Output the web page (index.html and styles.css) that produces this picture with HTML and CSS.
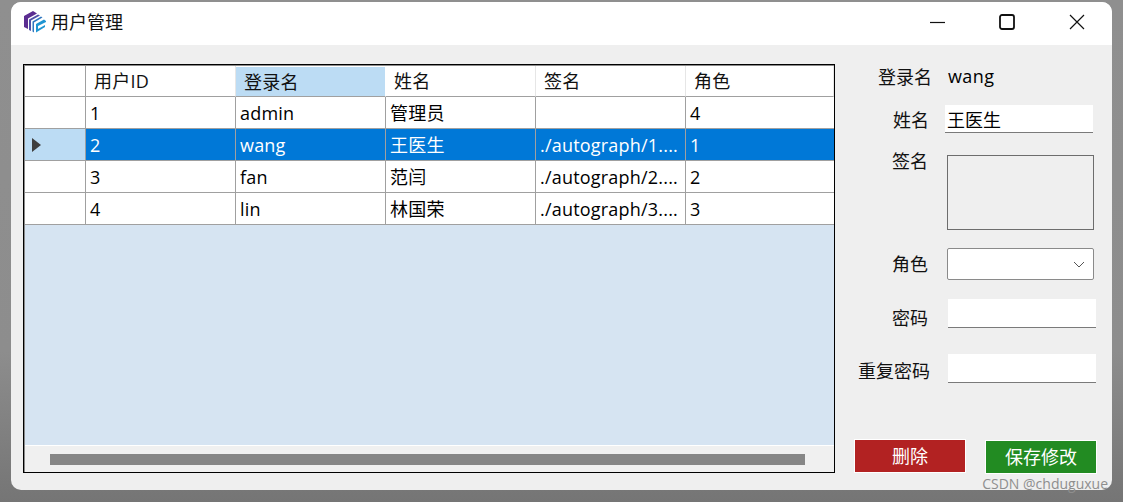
FILE: index.html
```html
<!DOCTYPE html>
<html lang="zh">
<head>
<meta charset="utf-8">
<title>用户管理</title>
<link rel="stylesheet" href="styles.css">
</head>
<body>
<div class="window">
  <header class="titlebar">
    <svg class="logo" viewBox="0 0 24 24" width="24" height="24" aria-hidden="true">
      <path d="M1 6 L10 1 L14 3.500 L5 8.500 V19 L1 17 Z" fill="#5b2d91"/>
      <path d="M6 9.500 L15 4.500 L17 5.500 L8 10.500 V21 L6 20 Z" fill="#4f4fa8"/>
      <path d="M9.500 11.500 L18 6.500 L19.500 7.500 L11 12.500 V22.500 L9.500 21.500 Z" fill="#3178c0"/>
      <path d="M13 14 L21 9.500 L23 11 V12 L15 16 V19 L22 15 V17 L13 22.500 Z" fill="#1f95d2"/>
    </svg>
    <h1 class="title">用户管理</h1>
    <div class="controls">
      <svg width="16" height="16" viewBox="0 0 16 16" aria-hidden="true"><path d="M1 8.500H16" class="glyph"/></svg>
      <svg width="16" height="16" viewBox="0 0 16 16" aria-hidden="true"><rect x="1" y="1" width="14" height="14" rx="2" class="glyph glyph-heavy"/></svg>
      <svg width="16" height="16" viewBox="0 0 16 16" aria-hidden="true"><path d="M1 1L15 15M15 1L1 15" class="glyph"/></svg>
    </div>
  </header>

  <main class="content">
    <section class="grid-view">
      <div class="grid">
        <div class="hcell corner"></div>
        <div class="hcell">用户ID</div>
        <div class="hcell sorted">登录名</div>
        <div class="hcell">姓名</div>
        <div class="hcell">签名</div>
        <div class="hcell">角色</div>

        <div class="rowhead"></div>
        <div class="cell">1</div>
        <div class="cell">admin</div>
        <div class="cell">管理员</div>
        <div class="cell"></div>
        <div class="cell">4</div>

        <div class="rowhead current"><span class="arrow"></span></div>
        <div class="cell selected">2</div>
        <div class="cell selected">wang</div>
        <div class="cell selected">王医生</div>
        <div class="cell selected">./autograph/1....</div>
        <div class="cell selected">1</div>

        <div class="rowhead"></div>
        <div class="cell">3</div>
        <div class="cell">fan</div>
        <div class="cell">范闫</div>
        <div class="cell">./autograph/2....</div>
        <div class="cell">2</div>

        <div class="rowhead"></div>
        <div class="cell">4</div>
        <div class="cell">lin</div>
        <div class="cell">林国荣</div>
        <div class="cell">./autograph/3....</div>
        <div class="cell">3</div>
      </div>
      <div class="empty"></div>
      <div class="hscroll"><div class="thumb"></div></div>
    </section>

    <aside class="form">
      <div class="row row-login"><span class="label">登录名</span><span class="value">wang</span></div>
      <div class="row row-name"><span class="label">姓名</span><span class="textbox name-box">王医生</span></div>
      <div class="row row-sign"><span class="label">签名</span><span class="picture"></span></div>
      <div class="row row-role"><span class="label">角色</span>
        <span class="combo">
          <svg width="12" height="7" viewBox="0 0 12 7" aria-hidden="true"><path d="M1 1L6 6L11 1" class="chev"/></svg>
        </span>
      </div>
      <div class="row row-pass"><span class="label">密码</span><span class="textbox pass-box"></span></div>
      <div class="row row-repeat"><span class="label">重复密码</span><span class="textbox pass-box"></span></div>
      <div class="actions">
        <span class="btn btn-del">删除</span>
        <span class="btn btn-save">保存修改</span>
      </div>
    </aside>
  </main>
  <div class="watermark">CSDN @chduguxue</div>
</div>
</body>
</html>
```

FILE: styles.css
```css
* { box-sizing: border-box; }
html, body { margin: 0; height: 502px; overflow: hidden; }
body {
  background: linear-gradient(180deg, #8f8f8f 0%, #8d8d8d 70%, #757575 100%);
  font-family: "Open Sans", "Noto Sans CJK SC", sans-serif;
  font-size: 18px;
  color: #000;
  padding: 2px 11px 12px;
}
.window {
  position: relative;
  width: 1101px;
  height: 488px;
  background: #efefef;
  border-radius: 10px;
}
.titlebar {
  display: flex;
  align-items: center;
  height: 43px;
  background: #fff;
  border-radius: 10px 10px 0 0;
  padding-left: 12px;
}
.logo { flex: none; margin-top: -3px; }
.title {
  margin: -4px 0 0 4px;
  font-size: 18px;
  font-weight: 400;
  line-height: 24px;
  color: #111;
}
.controls {
  margin-left: auto;
  margin-top: -3px;
  display: flex;
  gap: 54px;
  padding-right: 27px;
  align-items: center;
}
.glyph { fill: none; stroke: #111; stroke-width: 1.2; }
.glyph-heavy { stroke-width: 1.800; }

.content {
  display: flex;
  padding: 19px 0 0 12px;
}
.grid-view {
  width: 812px;
  height: 409px;
  flex: none;
  border: 1px solid #000;
  padding: 1px 0 0 1px;
  display: flex;
  flex-direction: column;
  background: #8a8a8a;
}
.grid {
  display: grid;
  grid-template-columns: 61px repeat(4, 150px) 1fr;
  grid-template-rows: 31px repeat(4, 32px);
  flex: none;
}
.hcell, .cell, .rowhead {
  display: flex;
  align-items: center;
  background: #fff;
  white-space: nowrap;
  overflow: hidden;
  line-height: 1;
}
.hcell {
  padding: 0 0 0 8px;
  border-right: 1px solid #e6e6e6;
  border-bottom: 1px solid #a0a0a0;
  color: #111;
  letter-spacing: 0.2px;
}
.hcell.corner { border-right-color: #a0a0a0; }
.hcell.sorted {
  background: #bcdcf4;
  border-top: 1px solid #fff;
  border-right-color: #fff;
}
.cell {
  padding: 0 0 0 4px;
  border-right: 1px solid #a0a0a0;
  border-bottom: 1px solid #a0a0a0;
  letter-spacing: 0.2px;
}
.cell:nth-child(6n) { border-right: 0; }
.rowhead {
  border-right: 1px solid #a0a0a0;
  border-bottom: 1px solid #a0a0a0;
}
.rowhead.current { background: #bcdcf4; }
.arrow {
  width: 0;
  height: 0;
  margin-left: 7px;
  border-left: 9px solid #3f3f3f;
  border-top: 7px solid transparent;
  border-bottom: 7px solid transparent;
}
.cell.selected { background: #0078d7; color: #fff; }
.empty {
  height: 221px;
  background: #d6e4f2;
  border-bottom: 1px solid #fff;
}
.hscroll {
  flex: 1;
  padding: 8px 29px 7px 25px;
  background: #f0f0f0;
}
.thumb { height: 11px; background: #868686; }

.form {
  position: relative;
  flex: none;
  width: 266px;
  margin-top: -19px;
  padding-left: 23px;
  display: flex;
  flex-direction: column;
}
.row { display: flex; align-items: flex-start; }
.label {
  width: 74px;
  flex: none;
  text-align: right;
  line-height: 24px;
  color: #111;
  white-space: nowrap;
}
.row-login { margin-top: 20px; height: 40px; }
.row-login .value { margin-left: 16px; margin-top: -1px; line-height: 24px; letter-spacing: 0.4px; }
.row-name { height: 50px; }
.row-name .label { width: 71px; margin-top: 3px; }
.row-name .name-box { margin-left: 16px; }
.row-sign { height: 93px; }
.row-sign .label { width: 70px; margin-top: -6px; }
.row-sign .picture { margin-left: 19px; }
.row-role { height: 51px; }
.row-role .label { width: 70px; margin-top: 4px; }
.row-role .combo { margin-left: 19px; }
.row-pass { height: 55px; }
.row-pass .label { width: 70px; margin-top: 7px; }
.row-pass .pass-box { margin-left: 20px; }
.row-repeat { height: 86px; }
.row-repeat .label { width: 72px; margin-top: 5px; }
.row-repeat .pass-box { margin-left: 18px; }

.textbox {
  display: block;
  background: #fff;
  border-bottom: 1px solid #7a7a7a;
  padding-left: 2px;
}
.name-box { width: 148px; height: 28px; line-height: 30px; }
.pass-box { width: 148px; height: 29px; }
.picture {
  display: block;
  width: 147px;
  height: 75px;
  border: 1px solid #6d6d6d;
}
.combo {
  width: 147px;
  height: 32px;
  display: flex;
  align-items: center;
  justify-content: flex-end;
  padding-right: 8px;
  background: #fff;
  border: 1px solid #8a8a8a;
  border-radius: 2px;
}
.chev { fill: none; stroke: #555; stroke-width: 1; }

.actions {
  display: flex;
  align-items: flex-start;
  margin-left: -3px;
  gap: 21px;
}
.btn {
  width: 110px;
  height: 32px;
  display: flex;
  align-items: center;
  justify-content: center;
  color: #fff;
  line-height: 1;
  outline: 1px solid #fff;
}
.btn-del { background: #b22222; }
.btn-save { background: #228b22; margin-top: 1px; }

.watermark {
  position: absolute;
  right: 4px;
  bottom: -3px;
  font-family: "Open Sans", sans-serif;
  font-size: 14px;
  line-height: 18px;
  color: #8e8e8e;
  white-space: nowrap;
}
```
